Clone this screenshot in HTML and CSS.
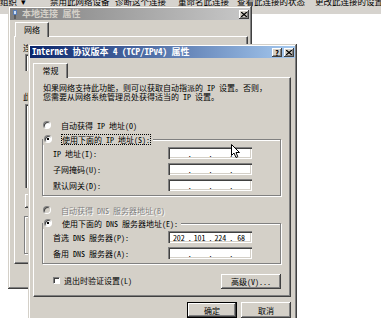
FILE: index.html
```html
<!DOCTYPE html>
<html lang="zh-CN">
<head>
    <meta charset="UTF-8">
    <meta name="viewport" content="width=device-width, initial-scale=1.0">
    <title>Internet 协议版本 4 (TCP/IPv4) 属性</title>
    <link rel="stylesheet" href="styles.css">
</head>
<body>
<div class="desktop">
    <div class="toolbar">
        <span>组织 ▾</span>
        <span>禁用此网络设备</span>
        <span>诊断这个连接</span>
        <span>重命名此连接</span>
        <span>查看此连接的状态</span>
        <span>更改此连接的设置</span>
    </div>

    <!-- 本地连接 属性 (inactive, behind) -->
    <div class="win inactive lan-win">
        <div class="titlebar">
            <svg class="title-icon" width="6" height="9" viewBox="0 0 6 9">
                <rect x="1" y="0" width="4" height="5" fill="#5a7fb8"/>
                <rect x="2" y="1" width="2" height="3" fill="#cfe0f4"/>
                <rect x="2.5" y="5" width="1" height="4" fill="#3a3a3a"/>
            </svg>
            <span class="title-text">本地连接 属性</span>
            <span class="title-btn"><svg width="6" height="5" viewBox="0 0 6 5"><path d="M0 0L6 5M6 0L0 5" stroke="#000" stroke-width="1.3"/></svg></span>
        </div>
        <div class="win-body lan-body">
            <div class="tabs"><div class="tab lan-tab">网络</div></div>
            <div class="panel lan-panel">
                <div class="peek">连接时使用:</div>
                <div class="adapter-row">
                    <div class="adapter-box"></div>
                </div>
                <div class="peek lan-label">此连接使用下列项目(O):</div>
                <div class="listbox"></div>
                <div class="lan-buttons">
                    <button class="btn"></button>
                </div>
                <div class="group lan-desc"></div>
            </div>
        </div>
    </div>

    <!-- Internet 协议版本 4 属性 (active) -->
    <div class="win ipv4-win">
        <div class="titlebar">
            <span class="title-text">Internet 协议版本 4 (TCP/IPv4) 属性</span>
            <span class="title-btn help">?</span>
            <span class="title-btn"><svg width="6" height="5" viewBox="0 0 6 5"><path d="M0 0L6 5M6 0L0 5" stroke="#000" stroke-width="1.3"/></svg></span>
        </div>
        <div class="win-body">
            <div class="tabs"><div class="tab">常规</div></div>
            <div class="panel ipv4-panel">
                <p class="intro">如果网络支持此功能，则可以获取自动指派的 IP 设置。否则，<br>您需要从网络系统管理员处获得适当的 IP 设置。</p>

                <div class="radio-row first-radio"><span class="radio"></span>自动获得 IP 地址(O)</div>
                <div class="group ip-group">
                    <div class="legend radio-row"><span class="radio checked"></span><span class="focus">使用下面的 IP 地址(S):</span></div>
                    <div class="field-grid">
                        <span>IP 地址(I):</span>
                        <div class="ip-box"><span></span><i>.</i><span></span><i>.</i><span></span><i>.</i><span></span></div>
                        <span>子网掩码(U):</span>
                        <div class="ip-box"><span></span><i>.</i><span></span><i>.</i><span></span><i>.</i><span></span></div>
                        <span>默认网关(D):</span>
                        <div class="ip-box"><span></span><i>.</i><span></span><i>.</i><span></span><i>.</i><span></span></div>
                    </div>
                </div>

                <div class="radio-row disabled dns-auto"><span class="radio"></span>自动获得 DNS 服务器地址(B)</div>
                <div class="group dns-group">
                    <div class="legend radio-row"><span class="radio checked"></span><span>使用下面的 DNS 服务器地址(E):</span></div>
                    <div class="field-grid">
                        <span>首选 DNS 服务器(P):</span>
                        <div class="ip-box"><span>202</span><i>.</i><span>101</span><i>.</i><span>224</span><i>.</i><span>68</span></div>
                        <span>备用 DNS 服务器(A):</span>
                        <div class="ip-box"><span></span><i>.</i><span></span><i>.</i><span></span><i>.</i><span></span></div>
                    </div>
                </div>

                <div class="check-row">
                    <label class="check-label"><span class="checkbox"></span>退出时验证设置(L)</label>
                    <button class="btn advanced">高级(V)...</button>
                </div>
            </div>
            <div class="dialog-buttons">
                <button class="btn default">确定</button>
                <button class="btn">取消</button>
            </div>
        </div>
    </div>

    <svg class="cursor" width="10" height="15" viewBox="0 0 10 15">
        <path d="M0.5 0.5V11.5L3 9L5 13.5L6.8 12.7L5 8.5H8.5Z" fill="#fff" stroke="#000" stroke-width="1"/>
    </svg>
</div>
</body>
</html>
```

FILE: styles.css
```css
* { box-sizing: border-box; }
body { margin: 0; background: #fff; color: #000; font: 8px/9px "Noto Sans Mono CJK SC", "Noto Sans CJK SC", sans-serif; }
p { margin: 0; }
.desktop { position: relative; width: 381px; height: 318px; overflow: hidden; }

/* explorer toolbar, mostly cut off at the top */
.toolbar { height: 14px; background: #d6d3ce; display: grid; grid-template-columns: 50px 65px 63px 59px 78px auto; overflow: hidden; font-size: 8.5px; line-height: 10px; }
.toolbar span { margin-top: -4px; white-space: nowrap; }

/* classic windows */
.win { position: absolute; display: flex; flex-direction: column; padding: 2px; background: #d4d0c8; box-shadow: inset -1px -1px #404040, inset 1px 1px #d4d0c8, inset -2px -2px #808080, inset 2px 2px #fff; }
.lan-win { left: 8px; top: 6px; width: 244px; height: 283px; }
.ipv4-win { left: 28px; top: 44px; width: 269px; height: 290px; }

.titlebar { flex: none; height: 12px; display: flex; align-items: center; gap: 2px; padding: 0 1px 0 2px; background: linear-gradient(90deg, #0a246a, #a6caf0); color: #fff; font-weight: bold; font-size: 9px; line-height: 12px; }
.inactive .titlebar { background: linear-gradient(90deg, #808080, #c8c8c8); color: #d4d0c8; }
.title-icon { flex: none; margin-right: 2px; }
.title-text { flex: 1; white-space: nowrap; overflow: hidden; }
.title-btn { flex: none; width: 10px; height: 9px; display: flex; align-items: center; justify-content: center; background: #d4d0c8; color: #000; font-size: 8px; line-height: 9px; box-shadow: inset -1px -1px #404040, inset 1px 1px #fff, inset -2px -2px #808080; }
.title-btn.help { font-weight: bold; }

.win-body { display: flex; flex-direction: column; padding: 5px 4px 0 3px; }
.tabs { display: flex; height: 14px; position: relative; z-index: 1; }
.tab { width: 35px; height: 15px; text-align: center; line-height: 14px; background: #d4d0c8; border-top: 1px solid #fff; border-left: 1px solid #fff; border-right: 1px solid #404040; box-shadow: inset -1px 0 #808080; }
.panel { border: 1px solid; border-color: #fff #404040 #404040 #fff; box-shadow: inset -1px -1px #808080; }

/* ipv4 panel */
.ipv4-panel { height: 220px; padding: 5px 9px 0 8px; }
.intro { padding-left: 1px; white-space: nowrap; }
.radio-row { display: flex; align-items: center; height: 12px; padding-left: 1px; white-space: nowrap; }
.first-radio { margin-top: 18px; }
.radio { flex: none; position: relative; width: 8px; height: 8px; margin-right: 10px; border-radius: 50%; background: #fff; border: 1px solid; border-color: #808080 #fff #fff #808080; box-shadow: inset 1px 1px #404040; }
.radio.checked::after { content: ""; position: absolute; left: 2px; top: 2px; width: 2px; height: 2px; background: #000; }
.disabled { color: #808080; text-shadow: 1px 1px #fff; }
.disabled .radio { background: #d4d0c8; }
.focus { outline: 1px dotted #000; outline-offset: 0; }

.group { border: 1px solid #808080; box-shadow: inset 1px 1px #fff, 1px 1px #fff; padding-bottom: 4px; }
.legend { width: fit-content; margin-top: -7px; margin-left: 0; padding-right: 3px; background: #d4d0c8; }
.ip-group { margin-top: 8px; }
.dns-auto { margin-top: 8px; }
.dns-group { margin-top: 7px; }
.field-grid { display: grid; grid-template-columns: 115px 84px; grid-auto-rows: 12px; row-gap: 4px; align-items: center; margin-top: 2px; padding-left: 10px; white-space: nowrap; }
.ip-box { display: flex; height: 12px; align-items: center; background: #fff; box-shadow: inset 1px 1px #808080, inset 2px 2px #404040, inset -1px -1px #fff, inset -2px -2px #d4d0c8; padding: 0 2px; }
.ip-box span { flex: 1; text-align: center; }
.ip-box i { font-style: normal; width: 3px; text-align: center; color: #000; }

.check-row { display: flex; align-items: center; justify-content: space-between; margin-top: 10px; }
.check-label { display: flex; align-items: center; margin-left: 11px; margin-top: -3px; }
.checkbox { width: 7px; height: 7px; margin-right: 4px; background: #fff; border: 1px solid; border-color: #808080 #fff #fff #808080; box-shadow: inset 1px 1px #404040; }

.btn { font: inherit; color: #000; height: 15px; padding: 0; border: none; background: #d4d0c8; box-shadow: inset -1px -1px #404040, inset 1px 1px #fff, inset -2px -2px #808080; }
.advanced { width: 60px; }
.dialog-buttons { display: flex; justify-content: flex-end; gap: 4px; margin-top: 5px; }
.dialog-buttons .btn { width: 50px; height: 16px; }
.btn.default { box-shadow: inset 0 0 0 1px #000, inset -2px -2px #404040, inset 2px 2px #fff, inset -3px -3px #808080; }

/* lan window contents: only the left strip shows past the front dialog */
.lan-body { padding: 2px 2px 0 4px; }
.lan-tab { margin-left: 1px; width: 34px; }
.lan-panel { height: 228px; padding: 6px 8px 0 8px; }
.peek { width: 5px; overflow: hidden; white-space: nowrap; }
.adapter-row { display: flex; margin: 2px 0 0 2px; }
.adapter-box { flex: 1; height: 17px; background: #fff; box-shadow: inset 1px 1px #808080, inset 2px 2px #404040; }
.lan-label { margin-top: 21px; }
.listbox { height: 84px; margin: 3px 0 0 2px; background: #fff; box-shadow: inset 1px 1px #808080, inset 2px 2px #404040, inset -1px -1px #fff; }
.lan-buttons { display: flex; margin: 6px 0 0 2px; }
.lan-buttons .btn { width: 60px; height: 14px; }
.lan-desc { height: 38px; margin: 8px 0 0 1px; }

.cursor { position: absolute; left: 231px; top: 144px; }
```
